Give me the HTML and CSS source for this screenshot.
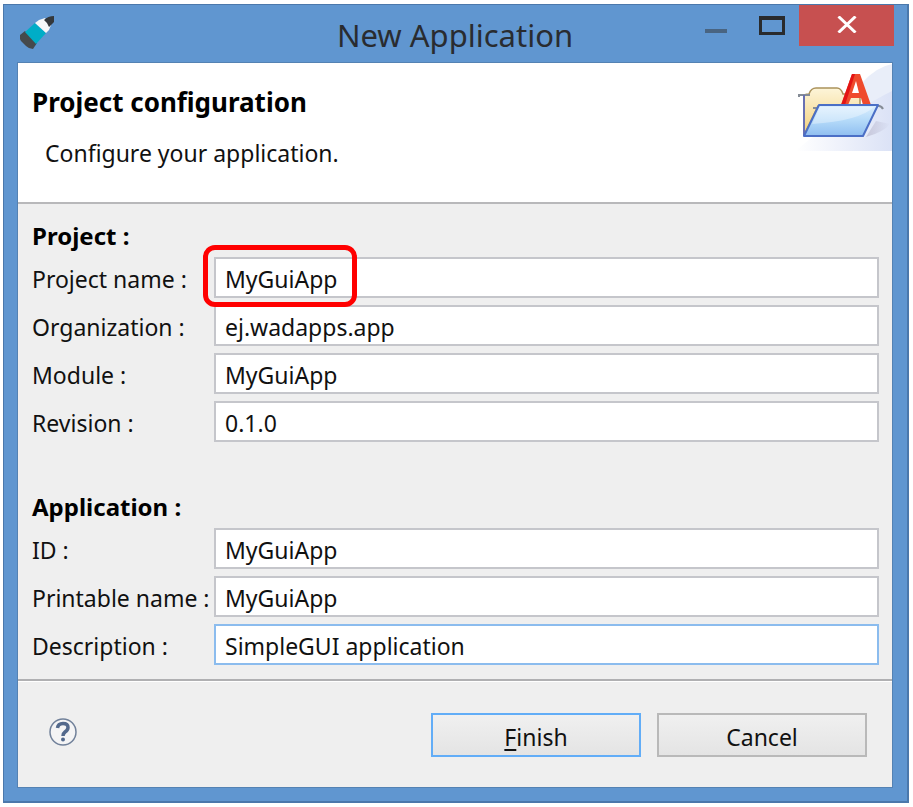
FILE: index.html
```
<!DOCTYPE html>
<html lang="en">
<head>
<meta charset="utf-8">
<title>New Application</title>
<link rel="stylesheet" href="styles.css">
</head>
<body>
<main class="window">
  <header class="titlebar">
    <svg class="app-icon" viewBox="0 0 34 34" aria-hidden="true">
      <path d="M0 19 5 15 17 27 13 33Q9 33 6 30L1 25Q-1 22 0 19Z" fill="#45494c"/>
      <path d="M5 16 15 7 26 17 16 28Z" fill="#00adc7"/>
      <path d="M15 7 19 4 25 2 31 9 29 14 26 17Z" fill="#f5f7f8"/>
      <path d="M24 4Q28 0 34 0V6L29 11Q28 7 24 4Z" fill="#34383b"/>
    </svg>
    <h1 class="title">New Application</h1>
    <div class="controls">
      <button class="control minimize" type="button" aria-label="Minimize">
        <svg viewBox="0 0 24 20" width="24" height="20"><path d="M0 13H22V17H0Z" fill="#496481"/></svg>
      </button>
      <button class="control maximize" type="button" aria-label="Maximize">
        <svg viewBox="0 0 26 20" width="26" height="20"><path fill-rule="evenodd" d="M0 0H26V19H0ZM3 4V16H23V4Z" fill="#292b2d"/></svg>
      </button>
      <button class="control close" type="button" aria-label="Close">
        <svg viewBox="0 0 20 17" width="20" height="17"><path d="M1.500 .5 18.500 16.500M18.500 .5 1.500 16.500" stroke="#fff" stroke-width="3" fill="none"/></svg>
      </button>
    </div>
  </header>
  <form class="dialog">
    <div class="banner">
      <div>
        <h2 class="heading">Project configuration</h2>
        <p class="subtitle">Configure your application.</p>
      </div>
      <svg class="banner-art" viewBox="0 0 96 88" aria-hidden="true">
        <defs>
          <linearGradient id="haze" x1="0" x2="1" y1="0" y2="0"><stop offset="0" stop-color="#fff"/><stop offset="1" stop-color="#dbe2f6"/></linearGradient>
          <linearGradient id="paper" x1="0" x2="0" y1="0" y2="1"><stop offset="0" stop-color="#fdf5d9"/><stop offset="1" stop-color="#f2cf7b"/></linearGradient>
          <linearGradient id="front" x1="0" x2="0" y1="0" y2="1"><stop offset="0" stop-color="#dceefe"/><stop offset=".5" stop-color="#b4daf9"/><stop offset="1" stop-color="#8fbef0"/></linearGradient>
          <linearGradient id="shade" x1="0" x2="1" y1="0" y2="0"><stop offset="0" stop-color="#a9a5bd"/><stop offset="1" stop-color="#dbe2f6"/></linearGradient>
        </defs>
        <path d="M66 20Q80 4 96 1V40L72 46Z" fill="#e9eef9"/>
        <path d="M0 88C18 70 54 50 96 28V88Z" fill="url(#haze)"/>
        <path d="M70 74 80 58 94 61Q88 69 70 74Z" fill="url(#shade)" opacity=".5"/>
        <path d="M8 72V33Q8 31 13 31Q15 25 20 25H41Q45 25 47 31H64V44L22 43 8 72Z" fill="url(#paper)" stroke="#ab925b" stroke-width="1.500"/>
        <path d="M3 34V32H14M17 45H23M80 43Q85 42 87 46" fill="none" stroke="#858c96" stroke-width="2"/>
        <path d="M8 32V73" stroke="#6870b3" stroke-width="2"/>
        <path fill-rule="evenodd" d="M45 42 56 11H64L75 42H67L65 35H55L52 42ZM56 30H63L60 18Z" fill="#ef4a2c"/>
        <path d="M45 42 56 11H59L49 42Z" fill="#e31414"/>
        <path d="M23 42H82L67 73H8Z" fill="url(#front)" stroke="#4b6fc6" stroke-width="2" stroke-linejoin="round"/>
        <path d="M24 44H78Q63 58 16 61Z" fill="#fff" opacity=".35"/>
      </svg>
    </div>
    <div class="fields">
      <section class="group">
        <h3 class="heading">Project :</h3>
        <div class="row"><label for="name">Project name :</label><div class="callout"><input id="name" type="text" value="MyGuiApp"></div></div>
        <div class="row"><label for="org">Organization :</label><input id="org" type="text" value="ej.wadapps.app"></div>
        <div class="row"><label for="module">Module :</label><input id="module" type="text" value="MyGuiApp"></div>
        <div class="row"><label for="revision">Revision :</label><input id="revision" type="text" value="0.1.0"></div>
      </section>
      <section class="group">
        <h3 class="heading">Application :</h3>
        <div class="row"><label for="appid">ID :</label><input id="appid" type="text" value="MyGuiApp"></div>
        <div class="row"><label for="printable">Printable name :</label><input id="printable" type="text" value="MyGuiApp"></div>
        <div class="row"><label for="description">Description :</label><input id="description" class="active" type="text" value="SimpleGUI application"></div>
      </section>
    </div>
    <footer class="actions">
      <button class="help" type="button" aria-label="Help">
        <svg viewBox="0 0 28 28" width="28" height="28">
          <circle cx="14" cy="14" r="13" fill="#f4f4f5" stroke="#71819a" stroke-width="1.500"/>
          <path d="M8.500 10Q9 5.500 14 5.500Q19 5.500 19 9.500Q19 12 16 14Q14 15.500 14 18" fill="none" stroke="#53698c" stroke-width="3.500"/>
          <circle cx="14" cy="21.500" r="2" fill="#53698c"/>
        </svg>
      </button>
      <button class="button primary" type="submit"><span class="mnemonic">F</span>inish</button>
      <button class="button" type="button">Cancel</button>
    </footer>
  </form>
</main>
</body>
</html>
```
FILE: styles.css
```
* {
  box-sizing: border-box;
}

body {
  margin: 0;
  padding: 4px 4px 5px 3px;
  background: #fff;
  color: #111;
  font: 23px/28px "Noto Sans", "Open Sans", sans-serif;
}

h1, h2, h3, p {
  margin: 0;
}

.window {
  padding: 0 14px 13px 13px;
  background: #6096d0;
  border: 1px solid #4b78ab;
  border-right-width: 2px;
  border-bottom-width: 2px;
}

.titlebar {
  position: relative;
  display: flex;
  justify-content: center;
  height: 57px;
}

.app-icon {
  position: absolute;
  left: 3px;
  top: 11px;
  width: 34px;
  height: 34px;
}

.title {
  padding-top: 10px;
  color: #292c30;
  font-size: 31px;
  font-weight: 400;
  line-height: 40px;
}

.controls {
  position: absolute;
  top: 0;
  right: -1px;
  display: flex;
}

.control {
  display: flex;
  justify-content: center;
  width: 55px;
  height: 41px;
  padding: 11px 0 0;
  border: 0;
  background: transparent;
}

.close {
  width: 95px;
  background: #c75050;
}

.dialog {
  background: #efefef;
  border: 1px solid #5482b3;
}

.banner {
  display: flex;
  justify-content: space-between;
  height: 141px;
  padding-left: 14px;
  background: #fff;
  border-bottom: 2px solid #b8b8ba;
}

.heading {
  color: #000;
  font-size: 24px;
  font-weight: 700;
}

.banner .heading {
  padding-top: 25px;
  font-size: 26px;
}

.subtitle {
  padding: 23px 0 0 13px;
}

.banner-art {
  width: 96px;
  height: 88px;
}

.fields {
  display: grid;
  gap: 51px;
  padding: 18px 13px 14px 14px;
}

.group {
  display: grid;
  gap: 7px;
}

.row {
  display: grid;
  grid-template-columns: 182px 1fr;
  align-items: center;
}

label {
  padding-top: 2px;
  white-space: nowrap;
}

input {
  display: block;
  width: 100%;
  height: 41px;
  padding: 3px 9px 0;
  border: 2px solid #c5c6cb;
  border-radius: 0;
  outline: 0;
  background: #fff;
  color: #111;
  font: inherit;
}

.active {
  border-color: #8bbcee;
}

.callout {
  position: relative;
}

.callout::after {
  content: "";
  position: absolute;
  top: -12px;
  left: -11px;
  box-sizing: border-box;
  width: 154px;
  height: 62px;
  border: 5px solid #f00;
  border-radius: 12px;
  pointer-events: none;
}

.actions {
  display: flex;
  align-items: center;
  gap: 16px;
  height: 108px;
  padding: 2px 25px 0 31px;
  border-top: 2px solid #b0b0b2;
  box-shadow: inset 0 1px #fff;
}

.help {
  display: flex;
  margin: 0 auto 6px 0;
  padding: 0;
  border: 0;
  background: transparent;
}

.button {
  width: 210px;
  height: 44px;
  padding: 3px 0 0;
  border: 2px solid #b9b9b9;
  background: linear-gradient(#f0f0f0, #e4e4e4);
  color: #111;
  font: inherit;
}

.primary {
  border-color: #62adf7;
}

.mnemonic {
  text-decoration: underline;
  text-underline-offset: 3px;
}
```
